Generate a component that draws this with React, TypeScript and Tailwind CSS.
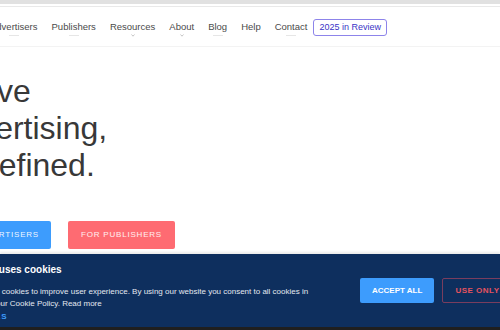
import React from "react";

const navItems: { label: string; mark: "line" | "chev" | "none" }[] = [
  { label: "Advertisers", mark: "line" },
  { label: "Publishers", mark: "line" },
  { label: "Resources", mark: "chev" },
  { label: "About", mark: "chev" },
  { label: "Blog", mark: "line" },
  { label: "Help", mark: "none" },
  { label: "Contact", mark: "line" },
];

export default function App() {
  return (
    <div className="relative w-[500px] h-[330px] overflow-hidden bg-white font-['Liberation_Sans',Arial,sans-serif]">
      <div className="h-[4px] bg-[#e1e1e1]" />
      <div className="h-[2px] bg-white" />
      <div className="h-[1px] bg-[#e9e9e9]" />

      {/* nav */}
      <nav className="h-[40px] border-b border-[#f3f3f3] flex items-start pt-[13px] pl-0 whitespace-nowrap">
        <div className="flex items-start gap-[14px] ml-[-10px]">
          {navItems.map((it) => (
            <div key={it.label} className="flex flex-col items-center">
              <span className="text-[9.5px] leading-[14px] text-[#4a4a4a]">{it.label}</span>
              {it.mark === "line" && <div className="mt-[1px] w-[10px] h-[1px] bg-[#e6e6e6]" />}
              {it.mark === "chev" && (
                <svg width="4" height="3" viewBox="0 0 4 3" className="mt-[0px]">
                  <path d="M0.5 0.5 L2 2.2 L3.5 0.5" stroke="#b5b5b5" strokeWidth="0.8" fill="none" />
                </svg>
              )}
            </div>
          ))}
          <div className="ml-[-8px] mt-[-1px] h-[17px] px-[5px] border border-[#8d84ea] rounded-[3px] flex items-center">
            <span className="text-[9px] leading-[15px] text-[#3a33c6]">2025 in Review</span>
          </div>
        </div>
      </nav>

      {/* hero */}
      <section className="ml-[-60px] pt-[26px]">
        <h1 className="text-[32px] leading-[37px] text-[#383838] font-normal whitespace-nowrap">
          Native
          <br />
          Advertising,
          <br />
          Redefined.
        </h1>
        <div className="mt-[37px] flex gap-[17px] whitespace-nowrap">
          <button className="h-[28px] px-[12px] rounded-[2px] bg-[#3d9cfd] text-[8px] tracking-[0.8px] text-white/95">
            FOR ADVERTISERS
          </button>
          <button className="h-[28px] px-[13px] rounded-[2px] bg-[#fe6b72] text-[8px] tracking-[0.8px] text-white/90">
            FOR PUBLISHERS
          </button>
        </div>
      </section>

      {/* cookie banner */}
      <div className="absolute left-0 right-0 top-[254px] h-[73px] bg-[#0e2f5e] shadow-[0_-2px_2px_rgba(0,0,0,0.08)] flex items-center whitespace-nowrap overflow-hidden">
        <div className="ml-[-64px] w-[380px] shrink-0 self-start pt-[9px]">
          <div className="text-[10px] leading-[14px] font-bold text-white">This website uses cookies</div>
          <p className="mt-[9px] text-[8px] leading-[12.3px] text-[#e3e8f0]">
            This website uses cookies to improve user experience. By using our website you consent to all cookies in
            <br />
            accordance with our Cookie Policy. Read more
          </p>
          <div className="text-[8px] leading-[12px] font-bold tracking-[0.9px] text-[#3d9cfd]">SHOW DETAILS</div>
        </div>
        <button className="ml-[44px] shrink-0 h-[25px] px-[12px] rounded-[2px] bg-[#3d9cfd] text-[8px] font-bold text-white">
          ACCEPT ALL
        </button>
        <button className="ml-[8px] shrink-0 h-[25px] px-[12px] rounded-[2px] border border-[#7a3d5e] text-[8px] font-bold tracking-[0.5px] text-[#e5535f]">
          USE ONLY NECESSARY
        </button>
      </div>
      <div className="absolute left-0 right-0 bottom-0 h-[3px] bg-[#1f1f1f]" />
    </div>
  );
}
